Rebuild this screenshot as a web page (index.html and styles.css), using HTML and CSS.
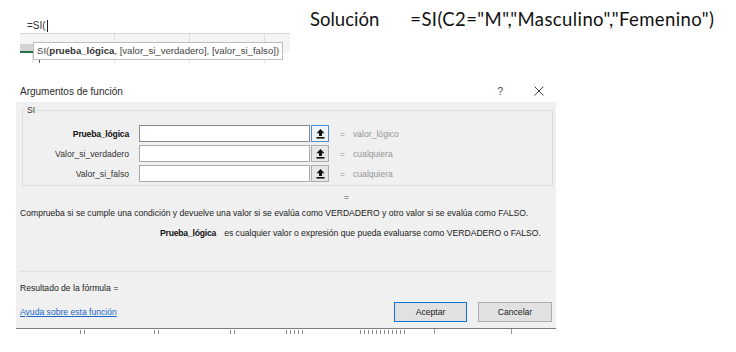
FILE: index.html
```html
<!DOCTYPE html>
<html lang="es">
<head>
<meta charset="utf-8">
<title>Argumentos de función</title>
<link rel="stylesheet" href="styles.css">
</head>
<body>
<div class="top">
  <div class="sheet">
    <div class="fbar"><span class="ftext">=SI(</span><span class="caret"></span></div>
    <div class="grid">
      <div class="c c0 h sel"></div><div class="c c1 h"></div><div class="c c2 h"></div><div class="c c3 h"></div><div class="c c4 h"></div>
      <div class="c c0"></div><div class="c c1"><span class="tick"></span></div><div class="c c2"></div><div class="c c3"></div><div class="c c4"></div>
      <div class="tip">SI(<b>prueba_lógica</b>, [valor_si_verdadero], [valor_si_falso])</div>
    </div>
  </div>
  <div class="sol">
    <span class="sol-label">Solución</span>
    <span class="sol-formula">=SI(C2="M","Masculino","Femenino")</span>
  </div>
</div>

<div class="dialog">
  <div class="titlebar">
    <span class="title">Argumentos de función</span>
    <div class="tb-icons">
      <span class="help">?</span>
      <svg class="close" width="10" height="10" viewBox="0 0 10 10"><path d="M0.5 0.5L9.5 9.5M9.5 0.5L0.5 9.5" stroke="#444" stroke-width="1" fill="none"/></svg>
    </div>
  </div>
  <div class="body">
    <fieldset class="group">
      <legend>SI</legend>
      <div class="row">
        <span class="lbl bold">Prueba_lógica</span>
        <span class="inp focus"></span>
        <span class="rbtn active"><svg width="9" height="10" viewBox="0 0 9 10"><path d="M4.5 0L0.5 4.2H3V7H6V4.2H8.5Z" fill="#111"/><rect x="0.5" y="8" width="8" height="1.6" fill="#111"/></svg></span>
        <span class="eq">=</span>
        <span class="val">valor_lógico</span>
      </div>
      <div class="row">
        <span class="lbl">Valor_si_verdadero</span>
        <span class="inp"></span>
        <span class="rbtn"><svg width="9" height="10" viewBox="0 0 9 10"><path d="M4.5 0L0.5 4.2H3V7H6V4.2H8.5Z" fill="#111"/><rect x="0.5" y="8" width="8" height="1.6" fill="#111"/></svg></span>
        <span class="eq">=</span>
        <span class="val">cualquiera</span>
      </div>
      <div class="row">
        <span class="lbl">Valor_si_falso</span>
        <span class="inp"></span>
        <span class="rbtn"><svg width="9" height="10" viewBox="0 0 9 10"><path d="M4.5 0L0.5 4.2H3V7H6V4.2H8.5Z" fill="#111"/><rect x="0.5" y="8" width="8" height="1.6" fill="#111"/></svg></span>
        <span class="eq">=</span>
        <span class="val">cualquiera</span>
      </div>
    </fieldset>
    <div class="eqline">=</div>
    <div class="desc">Comprueba si se cumple una condición y devuelve una valor si se evalúa como VERDADERO y otro valor si se evalúa como FALSO.</div>
    <div class="detail"><b>Prueba_lógica</b><span class="detail-text">es cualquier valor o expresión que pueda evaluarse como VERDADERO o FALSO.</span></div>
    <div class="sep"></div>
    <div class="result">Resultado de la fórmula =</div>
    <div class="footer">
      <a class="link" href="#">Ayuda sobre esta función</a>
      <div class="buttons">
        <span class="btn primary">Aceptar</span>
        <span class="btn">Cancelar</span>
      </div>
    </div>
  </div>
</div>
<div class="under">
  <span class="frag w1"></span><span class="frag w2"></span><span class="frag w3"></span><span class="frag w4"></span><span class="frag w5"></span><span class="vline v1"></span><span class="vline v2"></span>
</div>
</body>
</html>
```

FILE: styles.css
```css
* { box-sizing: border-box; }
html, body { margin: 0; padding: 0; background: #fff; }
body {
  width: 736px;
  height: 352px;
  overflow: hidden;
  font-family: "Liberation Sans", Arial, sans-serif;
  font-size: 8.6px;
  color: #1e1e1e;
}

/* ---------- top area ---------- */
.top {
  display: flex;
  height: 80px;
  align-items: flex-start;
}
.sheet {
  margin-left: 20px;
  width: 270px;
}
.fbar {
  height: 34px;
  border-bottom: 1px solid #d8d8d8;
  display: flex;
  align-items: flex-end;
  padding: 0 0 1px 7px;
}
.ftext {
  font-size: 10px;
  color: #333;
  line-height: 12px;
}
.caret {
  width: 1px;
  height: 12px;
  background: #222;
  margin-left: 1px;
}
.grid {
  position: relative;
  display: grid;
  grid-template-columns: 13px 82px 75px 75px 25px;
  grid-template-rows: 19px 10px;
}
.c { border-right: 1px solid #e2e2e2; }
.c4 { border-right: none; }
.h { background: #f4f4f4; border-right-color: #dedede; }
.sel {
  background: linear-gradient(#f4f4f4 10px, #d4d4d4 10px);
  border-bottom: 2px solid #217346;
  border-right: none;
}
.c1 { position: relative; }
.tick {
  position: absolute;
  left: 6px;
  top: 5px;
  width: 1px;
  height: 5px;
  background: #555;
}
.tip {
  position: absolute;
  left: 13px;
  top: 8px;
  width: 250px;
  height: 18px;
  background: #fff;
  border: 1px solid #bdbdbd;
  font-size: 9.6px;
  line-height: 16px;
  padding-left: 3px;
  color: #444;
  white-space: nowrap;
}
.tip b { color: #333; }

.sol {
  margin-left: 20px;
  padding-top: 8px;
  display: flex;
  font-family: "Lato", "Open Sans", sans-serif;
  font-size: 18.5px;
  color: #111;
  line-height: 22px;
}
.sol-formula { margin-left: 31px; letter-spacing: 0.4px; }

/* ---------- dialog ---------- */
.dialog {
  margin-left: 16px;
  width: 540px;
  border-bottom: 1px solid #7a7a7a;
}
.titlebar {
  height: 22px;
  background: #fff;
  display: flex;
  align-items: center;
  justify-content: space-between;
  padding: 0 12px 0 4px;
}
.title { font-size: 10px; color: #2a2a2a; }
.tb-icons {
  display: flex;
  align-items: center;
}
.help { font-size: 10px; color: #444; margin-right: 31px; }
.close { display: block; }

.body {
  background: #f0f0f0;
  height: 226px;
  padding: 3px 3px 0 4px;
  display: flex;
  flex-direction: column;
}
.group {
  margin: 0 0 0 2px;
  padding: 10px 0 4px 0;
  border: 1px solid #dcdcdc;
  height: 81px;
  min-width: 0;
  flex-shrink: 0;
}
.group legend {
  padding: 0 2px;
  margin-left: 2px;
  font-size: 8.6px;
  line-height: 10px;
  color: #333;
}
.row {
  display: flex;
  align-items: center;
  height: 17px;
  margin-bottom: 3px;
}
.lbl {
  width: 106px;
  text-align: right;
  margin-right: 10px;
  color: #333;
  white-space: nowrap;
}
.bold { font-weight: bold; color: #111; letter-spacing: -0.2px; }
.inp {
  width: 171px;
  height: 17px;
  background: #fff;
  border: 1px solid #ababab;
}
.inp.focus { border-color: #8a8a8a; }
.rbtn {
  width: 18px;
  height: 17px;
  margin-left: 1px;
  border: 1px solid #adadad;
  background: #e6e6e6;
  display: flex;
  align-items: center;
  justify-content: center;
}
.rbtn.active { border-color: #4a90d0; background: #eef4fa; }
.eq {
  margin-left: 11px;
  color: #9a9a9a;
}
.val {
  margin-left: 8px;
  color: #959595;
}
.eqline {
  margin-top: 5px;
  height: 12px;
  line-height: 12px;
  padding-left: 324px;
  color: #555;
}
.desc {
  margin-top: 4px;
  height: 12px;
  line-height: 12px;
  color: #222;
  white-space: nowrap;
}
.detail {
  margin-top: 8px;
  height: 12px;
  line-height: 12px;
  padding-left: 140px;
  white-space: nowrap;
  color: #222;
}
.detail b { color: #111; letter-spacing: -0.2px; }
.detail-text { margin-left: 8px; }
.sep {
  margin-top: 32px;
  height: 1px;
  background: #e2e2e2;
  flex-shrink: 0;
}
.result {
  margin-top: 10px;
  height: 12px;
  line-height: 12px;
  color: #222;
}
.footer {
  margin-top: 8px;
  display: flex;
  align-items: center;
  justify-content: space-between;
  padding-right: 1px;
}
.link {
  color: #1a66c7;
  text-decoration: underline;
}
.buttons { display: flex; gap: 11px; }
.btn {
  width: 74px;
  height: 20px;
  display: flex;
  align-items: center;
  justify-content: center;
  background: #e1e1e1;
  border: 1px solid #adadad;
  color: #222;
}
.btn.primary { border-color: #0a78d4; width: 73px; }

/* ---------- sheet fragments under the dialog ---------- */
.under {
  margin-left: 16px;
  width: 540px;
  height: 5px;
  display: flex;
  align-items: flex-start;
}
.frag {
  height: 4px;
  margin-top: 1px;
  background: repeating-linear-gradient(90deg, #8a8a8a 0 1px, transparent 1px 4px);
}
.w1 { margin-left: 64px; width: 8px; }
.w2 { margin-left: 66px; width: 8px; }
.w3 { margin-left: 68px; width: 8px; }
.w4 { margin-left: 48px; width: 18px; }
.w5 { margin-left: 56px; width: 46px; }
.vline { width: 1px; height: 5px; background: #999; }
.v1 { margin-left: 28px; }
.v2 { margin-left: 76px; }
```
